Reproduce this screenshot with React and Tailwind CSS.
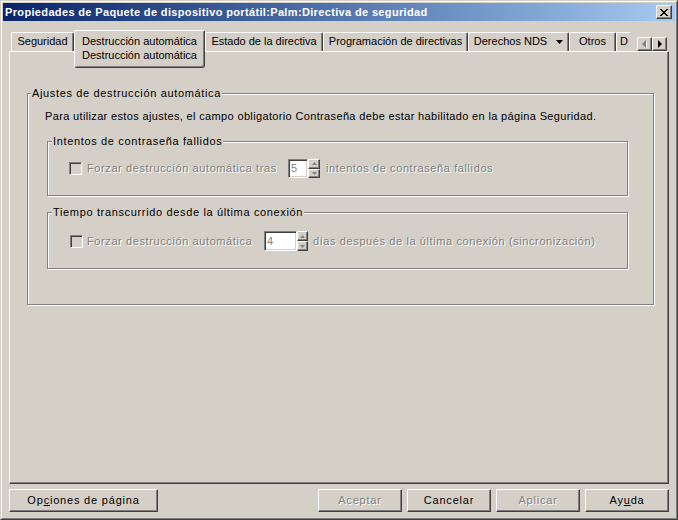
const raised =
  "border border-t-white border-l-white border-r-[#404040] border-b-[#404040] shadow-[inset_-1px_-1px_0_#808080] bg-[#d4d0c8]";
const sunken =
  "border border-t-[#808080] border-l-[#808080] border-r-white border-b-white shadow-[inset_1px_1px_0_#404040,inset_-1px_-1px_0_#d4d0c8]";
const etched =
  "relative border border-[#808080] shadow-[1px_1px_0_#ffffff,inset_1px_1px_0_#ffffff]";
const disabled = "text-[#808080] [text-shadow:1px_1px_0_#ffffff]";
const legend = "absolute top-[-7px] bg-[#d4d0c8] px-[1px] tracking-[0.65px]";

function CloseGlyph() {
  return (
    <svg width="8" height="7" viewBox="0 0 8 7" shapeRendering="crispEdges">
      <path d="M0 0h2l2 2.5L6 0h2L5 3.5 8 7H6L4 4.5 2 7H0l3-3.5z" fill="#000" />
    </svg>
  );
}

function Tab({ width, children }) {
  return (
    <div
      className={`flex h-[19px] shrink-0 items-start justify-center self-end rounded-t-[2px] border-t border-r border-l border-t-white border-r-[#404040] border-l-white pt-[2px] shadow-[inset_-1px_0_0_#808080] ${width}`}
    >
      {children}
    </div>
  );
}

function Spin() {
  return (
    <div className="flex h-full w-full flex-col">
      <div className={`flex flex-1 items-center justify-center ${raised}`}>
        <svg width="5" height="3" viewBox="0 0 5 3">
          <path d="M2.5 0L5 3H0z" fill="#808080" />
        </svg>
      </div>
      <div className={`flex flex-1 items-center justify-center ${raised}`}>
        <svg width="5" height="3" viewBox="0 0 5 3">
          <path d="M0 0h5L2.5 3z" fill="#808080" />
        </svg>
      </div>
    </div>
  );
}

function Checkbox() {
  return <div className={`h-[13px] w-[13px] shrink-0 bg-[#d4d0c8] ${sunken}`} />;
}

function Button({ width, dim, children }) {
  return (
    <button
      type="button"
      className={`flex h-[23px] items-center justify-center tracking-[0.8px] ${raised} ${width} ${dim ? disabled : "text-black"}`}
    >
      {children}
    </button>
  );
}

export default function App() {
  return (
    <div className="h-[520px] w-[678px] border border-t-[#d4d0c8] border-l-[#d4d0c8] border-r-[#404040] border-b-[#404040] bg-[#d4d0c8] font-['Liberation_Sans',Arial,sans-serif] text-[11px] leading-[13px] text-black">
      <div className="flex h-full flex-col border border-t-white border-l-white border-r-[#808080] border-b-[#808080] p-[1px]">
        {/* title bar */}
        <div className="flex h-[18px] items-center justify-between bg-linear-to-r from-[#0a246a] to-[#a6caf0] pl-[2px] pr-[3px]">
          <span className="font-bold tracking-[0.35px] text-white">
            Propiedades de Paquete de dispositivo portátil:Palm:Directiva de seguridad
          </span>
          <div className={`flex h-[14px] w-[16px] items-center justify-center ${raised}`}>
            <CloseGlyph />
          </div>
        </div>

        <div className="flex flex-col px-[6px] pt-[9px]">
          {/* tabs */}
          <div className="flex h-[21px] pl-[2px] pr-[2px]">
            <Tab width="w-[63px]">Seguridad</Tab>
            <div className="relative z-10 flex h-[38px] w-[131px] shrink-0 flex-col items-center self-start rounded-t-[2px] rounded-b-[3px] border border-t-white border-l-white border-r-[#404040] border-b-[#404040] bg-[#d4d0c8] pt-[4px] shadow-[inset_-1px_-1px_0_#808080]">
              <span>Destrucción automática</span>
              <span className="mt-[1px]">Destrucción automática</span>
            </div>
            <Tab width="w-[118px]">Estado de la directiva</Tab>
            <Tab width="w-[145px]">Programación de directivas</Tab>
            <Tab width="w-[101px]">
              <span className="flex items-center gap-[9px]">
                Derechos NDS
                <svg width="7" height="4" viewBox="0 0 7 4">
                  <path d="M0 0h7L3.5 4z" fill="#000" />
                </svg>
              </span>
            </Tab>
            <Tab width="w-[47px]">Otros</Tab>
            <div className="flex h-[19px] w-[14px] shrink-0 justify-start self-end rounded-tl-[2px] border-t border-l border-t-white border-l-white pt-[2px] pl-[3px]">
              <span>D</span>
            </div>
            <div className="flex-1" />
            <div className="flex h-[14px] self-end">
              <div className={`flex h-[14px] w-[15px] items-center justify-center ${raised}`}>
                <svg width="5" height="8" viewBox="0 0 5 8">
                  <path d="M5 0v8H4.5L1 4z" fill="#ffffff" transform="translate(1 1)" />
                  <path d="M4 0v8L0 4z" fill="#808080" />
                </svg>
              </div>
              <div className={`flex h-[14px] w-[15px] items-center justify-center ${raised}`}>
                <svg width="4" height="8" viewBox="0 0 4 8">
                  <path d="M0 0l4 4-4 4z" fill="#000" />
                </svg>
              </div>
            </div>
          </div>

          {/* panel */}
          <div className="h-[433px] border border-t-white border-l-white border-r-[#404040] border-b-[#404040] pt-[41px] pl-[17px] shadow-[inset_-1px_-1px_0_#808080]">
            <div className={`h-[212px] w-[627px] pt-[16px] pl-[17px] ${etched}`}>
              <span className={`left-[3px] ${legend}`}>Ajustes de destrucción automática</span>
              <p className="tracking-[0.35px]">
                Para utilizar estos ajustes, el campo obligatorio Contraseña debe estar habilitado en la página Seguridad.
              </p>

              <div className={`mt-[18px] ml-[2px] h-[55px] w-[581px] pt-[17px] pl-[21px] ${etched}`}>
                <span className={`left-[4px] ${legend}`}>Intentos de contraseña fallidos</span>
                <div className="flex h-[19px] items-center tracking-[0.6px]">
                  <Checkbox />
                  <span className={`ml-[5px] w-[201px] shrink-0 ${disabled}`}>
                    Forzar destrucción automática tras
                  </span>
                  <div className={`flex h-[19px] w-[20px] items-center bg-white pl-[2px] text-[#808080] ${sunken}`}>5</div>
                  <div className="h-[19px] w-[12px]">
                    <Spin />
                  </div>
                  <span className={`ml-[6px] ${disabled}`}>intentos de contraseña fallidos</span>
                </div>
              </div>

              <div className={`mt-[16px] ml-[2px] h-[57px] w-[581px] pt-[18px] pl-[22px] ${etched}`}>
                <span className={`left-[4px] ${legend}`}>Tiempo transcurrido desde la última conexión</span>
                <div className="flex h-[20px] items-center tracking-[0.6px]">
                  <Checkbox />
                  <span className={`ml-[4px] w-[177px] shrink-0 ${disabled}`}>
                    Forzar destrucción automática
                  </span>
                  <div className={`flex h-[20px] w-[33px] items-center bg-white pl-[2px] text-[#808080] ${sunken}`}>4</div>
                  <div className="h-[20px] w-[11px]">
                    <Spin />
                  </div>
                  <span className={`ml-[5px] ${disabled}`}>
                    días después de la última conexión (sincronización)
                  </span>
                </div>
              </div>
            </div>
          </div>

          {/* buttons */}
          <div className="mt-[5px] flex justify-between">
            <Button width="w-[149px]">
              <span>
                Op<span className="underline">c</span>iones de página
              </span>
            </Button>
            <div className="flex gap-[5px]">
              <Button width="w-[84px]" dim>
                Aceptar
              </Button>
              <Button width="w-[84px]">Cancelar</Button>
              <Button width="w-[84px]" dim>
                Aplicar
              </Button>
              <Button width="w-[84px]">
                <span>
                  Ay<span className="underline">u</span>da
                </span>
              </Button>
            </div>
          </div>
        </div>
      </div>
    </div>
  );
}
